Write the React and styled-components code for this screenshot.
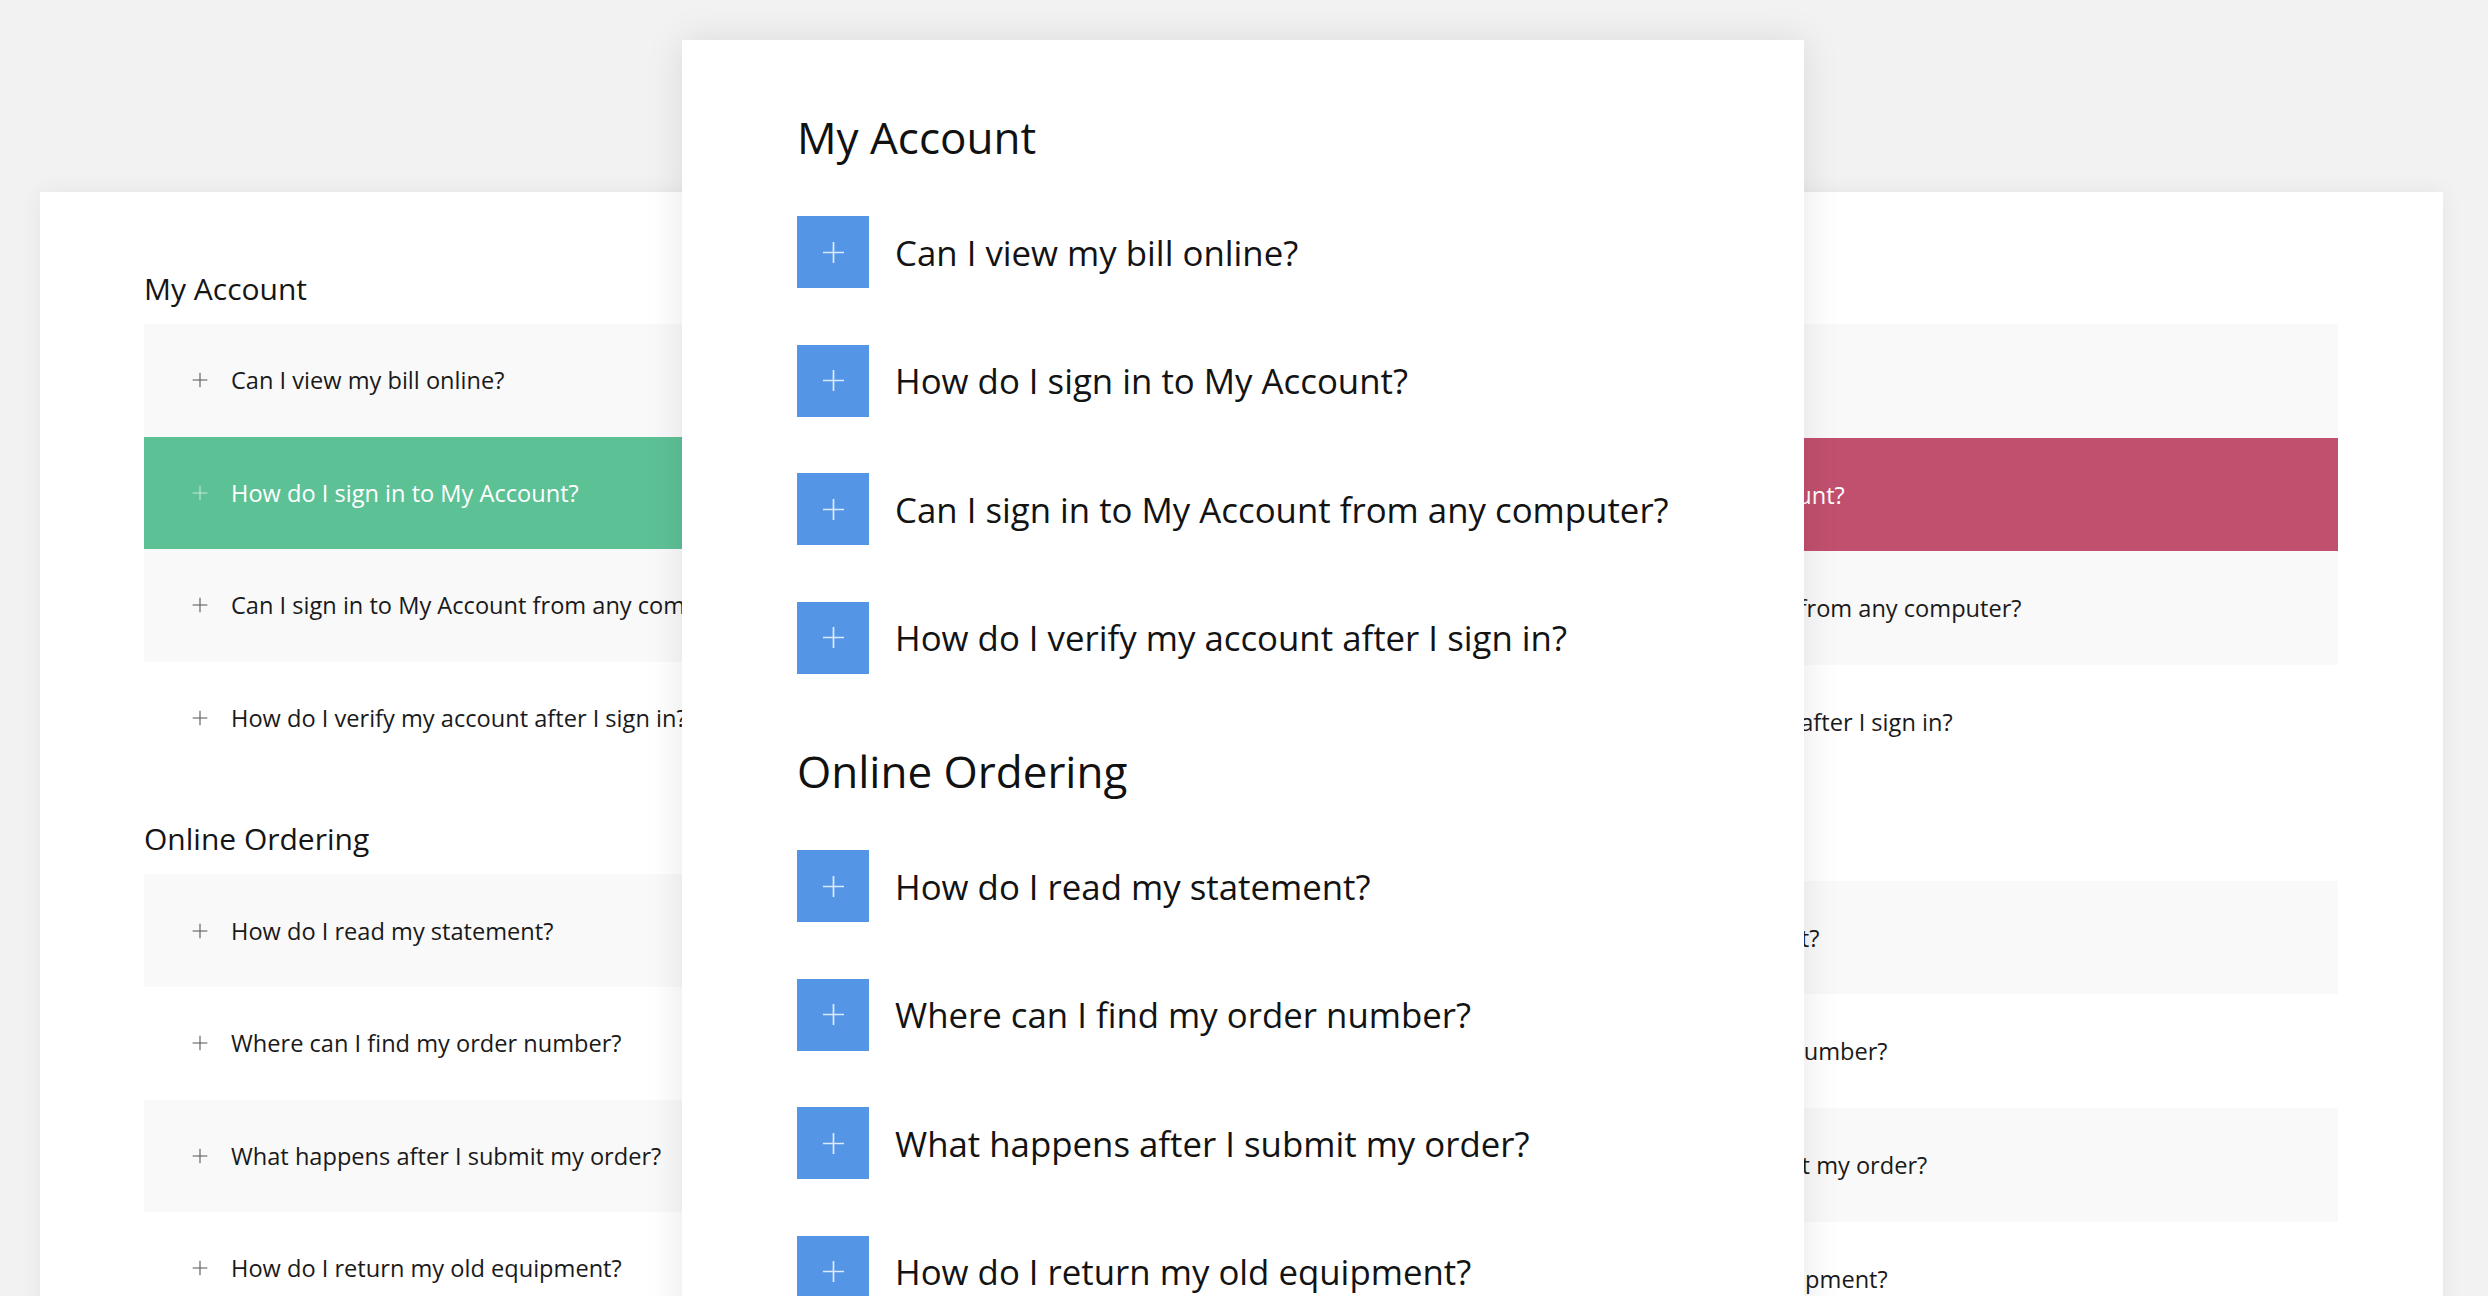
import React from "react";
import styled, { createGlobalStyle } from "styled-components";

const sections = [
  {
    title: "My Account",
    items: [
      "Can I view my bill online?",
      "How do I sign in to My Account?",
      "Can I sign in to My Account from any computer?",
      "How do I verify my account after I sign in?",
    ],
  },
  {
    title: "Online Ordering",
    items: [
      "How do I read my statement?",
      "Where can I find my order number?",
      "What happens after I submit my order?",
      "How do I return my old equipment?",
    ],
  },
];

const GlobalStyle = createGlobalStyle`
  html, body {
    margin: 0;
    padding: 0;
    background: #f2f2f2;
    overflow: hidden;
  }
  body {
    font-family: "Open Sans", "Liberation Sans", sans-serif;
    -webkit-font-smoothing: antialiased;
  }
  * { box-sizing: border-box; }
`;

const Stage = styled.div`
  position: relative;
  height: 1296px;
  overflow: hidden;
  display: flex;
  justify-content: space-between;
  align-items: flex-start;
  padding: 192px 45px 0 40px;
`;

const SideCard = styled.section`
  width: ${({ $w }) => $w}px;
  height: 1200px;
  background: #fff;
  box-shadow: 0 0 22px rgba(0, 0, 0, 0.06);
  padding: 79px 105px 0 104px;
`;

const SideHeading = styled.h3`
  margin: ${({ $top }) => $top}px 0 17px;
  font-size: 30px;
  line-height: 36px;
  font-weight: 400;
  color: #151515;
`;

const SideRow = styled.div`
  height: ${({ $h }) => $h}px;
  display: flex;
  align-items: center;
  gap: ${({ $gap }) => $gap}px;
  padding-left: 48px;
  font-size: 23.6px;
  color: ${({ $active }) => ($active ? "#fff" : "#1a1a1a")};
  background: ${({ $active, $accent, $shade }) =>
    $active ? $accent : $shade ? "#f9f9f9" : "#fff"};
  white-space: nowrap;
  overflow: hidden;
`;

const Feature = styled.section`
  position: absolute;
  top: 40px;
  left: 682px;
  width: 1122px;
  height: 1300px;
  background: #fff;
  box-shadow: 0 0 36px rgba(0, 0, 0, 0.1);
  padding: 71px 0 0 115px;
  z-index: 2;
`;

const FeatureHeading = styled.h2`
  margin: ${({ $first }) => ($first ? "0" : "71.5px")} 0 52px;
  font-size: 44px;
  line-height: 53px;
  font-weight: 400;
  color: #111;
`;

const FeatureList = styled.div`
  display: flex;
  flex-direction: column;
  gap: 56.5px;
`;

const FeatureRow = styled.div`
  display: flex;
  align-items: center;
  gap: 26px;
  font-size: 34.8px;
  color: #131313;
  white-space: nowrap;
`;

const PlusBox = styled.span`
  width: 72px;
  height: 72px;
  flex: none;
  display: flex;
  align-items: center;
  justify-content: center;
  background: #5595e5;
`;

const Plus = ({ size, color, width }) => (
  <svg width={size} height={size} viewBox="0 0 24 24" style={{ flex: "none" }}>
    <path d="M12 1V23M1 12H23" stroke={color} strokeWidth={width} fill="none" />
  </svg>
);

const Side = ({ width, accent, rowH, gap, sectionGap }) => (
  <SideCard $w={width}>
    {sections.map((s, si) => (
      <div key={s.title}>
        <SideHeading $top={si === 0 ? 0 : sectionGap}>{s.title}</SideHeading>
        {s.items.map((q, i) => {
          const active = si === 0 && i === 1;
          return (
            <SideRow
              key={q}
              $h={rowH}
              $gap={gap}
              $active={active}
              $accent={accent}
              $shade={i % 2 === 0}
            >
              <Plus size={16} width={1.6} color={active ? "rgba(255,255,255,0.65)" : "#555"} />
              {q}
            </SideRow>
          );
        })}
      </div>
    ))}
  </SideCard>
);

export default function App() {
  return (
    <>
      <GlobalStyle />
      <Stage>
        <Side width={1149} accent="#5dc196" rowH={112.6} gap={23} sectionGap={47} />
        <Side width={1148} accent="#c1506e" rowH={113.7} gap={34} sectionGap={49} />
        <Feature>
          {sections.map((s, si) => (
            <div key={s.title}>
              <FeatureHeading $first={si === 0}>{s.title}</FeatureHeading>
              <FeatureList>
                {s.items.map((q) => (
                  <FeatureRow key={q}>
                    <PlusBox>
                      <Plus size={23} width={1.8} color="rgba(255,255,255,0.8)" />
                    </PlusBox>
                    {q}
                  </FeatureRow>
                ))}
              </FeatureList>
            </div>
          ))}
        </Feature>
      </Stage>
    </>
  );
}
